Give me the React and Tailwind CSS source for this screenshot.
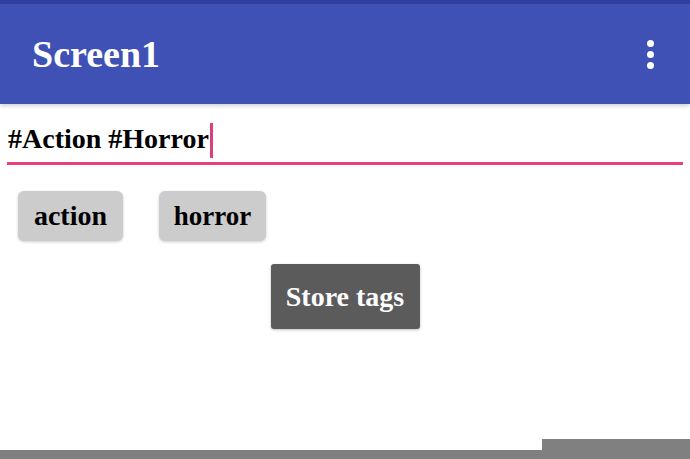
export default function App() {
  return (
    <div
      className="w-[690px] h-[459px] overflow-hidden bg-white flex flex-col"
      style={{ fontFamily: '"Liberation Serif", "DejaVu Serif", serif' }}
    >
      <div className="h-[4px] bg-[#303f9f] shrink-0" />
      <div className="h-[100px] shrink-0 bg-[#3f51b5] flex items-center justify-between pl-[32px] pr-[36px] shadow-[0_2px_4px_rgba(0,0,0,0.18)] relative z-10">
        <span className="text-white font-bold text-[38px] leading-none">Screen1</span>
        <div className="flex flex-col gap-[4px]">
          <span className="w-[7px] h-[7px] rounded-full bg-white" />
          <span className="w-[7px] h-[7px] rounded-full bg-white" />
          <span className="w-[7px] h-[7px] rounded-full bg-white" />
        </div>
      </div>

      <div className="mt-[17px] mx-[7px] pb-[5px] border-b-[3px] border-[#ec407a]">
        <div className="h-[36px] flex items-center pl-[1px]">
          <span className="text-black font-bold text-[28px] leading-[36px] whitespace-pre">#Action #Horror</span>
          <span className="w-[3px] h-[35px] bg-[#dc407a] ml-[1px] mt-[3px]" />
        </div>
      </div>

      <div className="mt-[26px] flex pl-[18px] gap-[36px]">
        <div className="w-[105px] h-[50px] rounded-[6px] bg-[#cccccc] shadow-[0_1px_3px_rgba(0,0,0,0.2)] flex items-center justify-center">
          <span className="text-black font-bold text-[28px] leading-none">action</span>
        </div>
        <div className="w-[107px] h-[50px] rounded-[6px] bg-[#cccccc] shadow-[0_1px_3px_rgba(0,0,0,0.2)] flex items-center justify-center">
          <span className="text-black font-bold text-[27px] leading-none">horror</span>
        </div>
      </div>

      <div className="mt-[23px] flex justify-center">
        <div className="w-[149px] h-[65px] rounded-[3px] bg-[#5b5b5c] shadow-[0_1px_3px_rgba(0,0,0,0.25)] flex items-center justify-center">
          <span className="text-white font-bold text-[28px] leading-none">Store tags</span>
        </div>
      </div>

      <div className="flex-1" />
      <div className="flex items-end shrink-0">
        <div className="flex-1 h-[9px] bg-[#808080]" />
        <div className="w-[148px] h-[20px] bg-[#808080]" />
      </div>
    </div>
  );
}
